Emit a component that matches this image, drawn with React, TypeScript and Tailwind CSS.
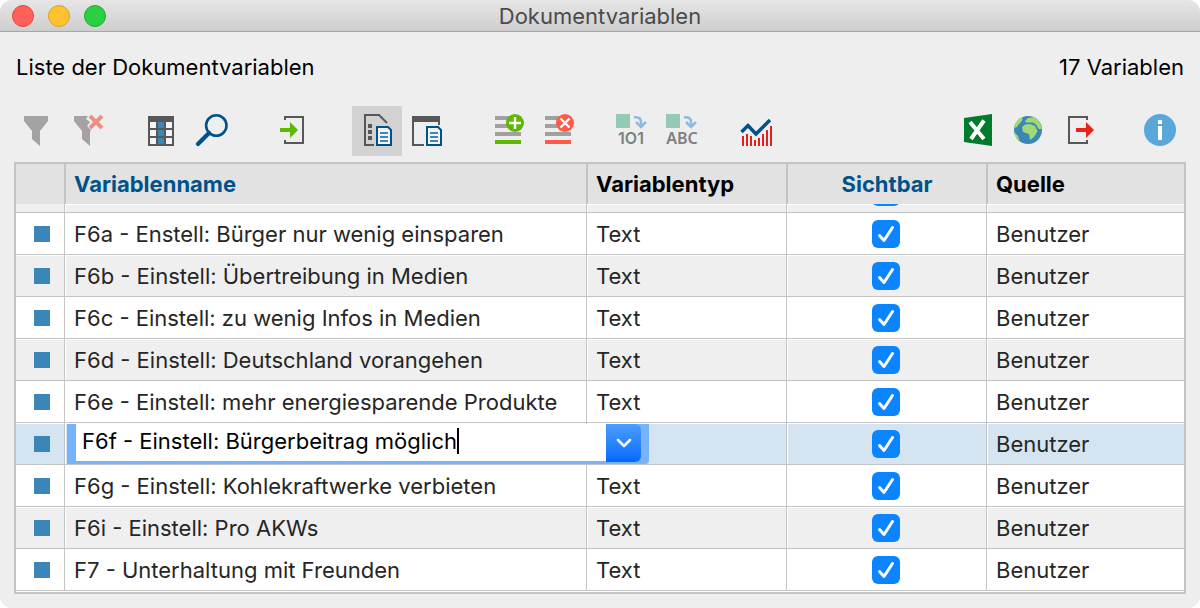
import React, { useState } from 'react';

type Variable = {
  name: string;
  type: string;
  source: string;
};

const variables: Variable[] = [
  { name: 'F6a - Enstell: Bürger nur wenig einsparen', type: 'Text', source: 'Benutzer' },
  { name: 'F6b - Einstell: Übertreibung in Medien', type: 'Text', source: 'Benutzer' },
  { name: 'F6c - Einstell: zu wenig Infos in Medien', type: 'Text', source: 'Benutzer' },
  { name: 'F6d - Einstell: Deutschland vorangehen', type: 'Text', source: 'Benutzer' },
  { name: 'F6e - Einstell: mehr energiesparende Produkte', type: 'Text', source: 'Benutzer' },
  { name: 'F6f - Einstell: Bürgerbeitrag möglich', type: '', source: 'Benutzer' },
  { name: 'F6g - Einstell: Kohlekraftwerke verbieten', type: 'Text', source: 'Benutzer' },
  { name: 'F6i - Einstell: Pro AKWs', type: 'Text', source: 'Benutzer' },
  { name: 'F7 - Unterhaltung mit Freunden', type: 'Text', source: 'Benutzer' },
];

const EDITED_ROW = 5;

function ToolButton({ label, active, children }: { label: string; active?: boolean; children: React.ReactNode }) {
  return (
    <button type="button" aria-label={label} title={label} className={`size-[50px] shrink-0 ${active ? 'bg-[#d2d2d2]' : ''}`}>
      <svg viewBox="0 0 50 50" className="size-full" fill="none">
        {children}
      </svg>
    </button>
  );
}

// Small blue page, shared by the two document icons
function PageShape() {
  return (
    <>
      <path d="M25 21H36L39 24V39H25Z" fill="#f4f4f4" stroke="#00538a" strokeWidth="2" />
      <path d="M28 27H36M28 31H36M28 35H36" stroke="#3e87bd" strokeWidth="2" />
    </>
  );
}

// Square and curved arrow, shared by the two convert icons
function ConvertShape() {
  return (
    <>
      <rect x="8" y="8" width="14" height="14" fill="#93cab6" />
      <path d="M26 11.2H28C31.5 11.2 33 13 33 16V20" stroke="#8fbadd" strokeWidth="2.6" />
      <path d="M28 16L33 21L38 16" stroke="#8fbadd" strokeWidth="2.6" />
    </>
  );
}

function Toolbar() {
  return (
    <div className="flex pl-[10px] pr-[15px]" role="toolbar">
      <div className="flex">
        <ToolButton label="Filter">
          <path d="M14 10H38V15L30 25V40L22 33V25L14 15Z" fill="#a3a3a3" />
        </ToolButton>
        <ToolButton label="Filter zurücksetzen">
          <path d="M14 10H28L26 13L30 16L27 20L31 24L30 26V40L22 33V25L14 15Z" fill="#a3a3a3" />
          <path d="M30 10L42 22M42 10L30 22" stroke="#ec8f85" strokeWidth="4" />
        </ToolButton>
      </div>

      <div className="flex ml-6">
        <ToolButton label="Spalten">
          <rect x="14" y="10" width="26" height="30" fill="#575757" />
          <path d="M16 16h6v6h-6zM16 24h6v6h-6zM16 32h6v6h-6zM32 16h6v6h-6zM32 24h6v6h-6zM32 32h6v6h-6z" fill="#f4f4f4" />
          <path d="M24 16h6v6h-6zM24 24h6v6h-6zM24 32h6v6h-6z" fill="#3a87b7" />
        </ToolButton>
        <ToolButton label="Suchen">
          <circle cx="32.3" cy="19.5" r="10.2" stroke="#00538a" strokeWidth="2.6" />
          <path d="M25 27L14 38" stroke="#00538a" strokeWidth="4.2" strokeLinecap="round" />
        </ToolButton>
      </div>

      <div className="flex ml-8">
        <ToolButton label="Importieren">
          <path d="M19 14V11H37V37H19V34" stroke="#575757" strokeWidth="2" />
          <path d="M14 22H24V16L32 24L24 32V26H14Z" fill="#5cb800" />
        </ToolButton>
      </div>

      <div className="flex ml-9">
        <ToolButton label="Variablenansicht" active>
          <path d="M22 39H13V9H27L35 17" stroke="#575757" strokeWidth="2" />
          <path d="M16 18h4v4h-4zM16 24h4v4h-4zM16 30h4v4h-4z" fill="#575757" />
          <PageShape />
        </ToolButton>
        <ToolButton label="Datenansicht">
          <path d="M22 39H11V11H37V19" stroke="#575757" strokeWidth="2" />
          <rect x="10" y="10" width="28" height="6" fill="#575757" />
          <PageShape />
        </ToolButton>
      </div>

      <div className="flex ml-8">
        <ToolButton label="Neue Variable">
          <path d="M11 12H37M11 20H37M11 28H37" stroke="#a0a0a0" strokeWidth="4" />
          <path d="M11 36H37" stroke="#5cb800" strokeWidth="4" />
          <circle cx="31" cy="17" r="9" fill="#5cb800" />
          <path d="M25 17H37M31 11V23" stroke="#fff" strokeWidth="2.4" />
        </ToolButton>
        <ToolButton label="Variable löschen">
          <path d="M11 12H37M11 20H37M11 28H37" stroke="#a0a0a0" strokeWidth="4" />
          <path d="M11 36H37" stroke="#ff5a47" strokeWidth="4" />
          <circle cx="31" cy="17" r="9" fill="#ff5a47" />
          <path d="M26.5 12.5L35.5 21.5M35.5 12.5L26.5 21.5" stroke="#fff" strokeWidth="2.4" />
        </ToolButton>
      </div>

      <div className="flex ml-6">
        <ToolButton label="In Zahl umwandeln">
          <ConvertShape />
          <text x="23" y="38" textAnchor="middle" fontSize="16" fontWeight="600" fill="#808080">1O1</text>
        </ToolButton>
        <ToolButton label="In Text umwandeln">
          <ConvertShape />
          <text x="24" y="38" textAnchor="middle" fontSize="16" fontWeight="600" fill="#808080" className="font-['Noto_Sans',sans-serif]">ABC</text>
        </ToolButton>
      </div>

      <div className="flex ml-6">
        <ToolButton label="Statistik">
          <path d="M11 40V30M15 40V28M19 40V30M23 40V34M27 40V32M31 40V28M35 40V24M39 40V20" stroke="#e2211c" strokeWidth="2" />
          <path d="M9.5 26L16 19.5L24 28L38 14" stroke="#00538a" strokeWidth="3.4" />
        </ToolButton>
      </div>

      <div className="flex ml-auto">
        <ToolButton label="Excel">
          <path d="M11 12L39 8V40L11 36Z" fill="#007a2b" />
          <path d="M17 16L31 33M31 14.5L18 33" stroke="#fff" strokeWidth="4" />
        </ToolButton>
        <ToolButton label="Web">
          <circle cx="25" cy="24" r="14" fill="#3a87b7" />
          <path d="M11.3 22C12 16 15.5 12 19.5 11.2L19 15L16 18L14 21Z" fill="#a2d977" />
          <path d="M22 15L25 12L31 11.3C35 13.5 38.5 18 38.8 23L35.5 23L33.5 19L30 16.500L23 16.500Z" fill="#a2d977" />
          <path d="M19 21L22 18.5L27 18L32 20L34.5 25L33 28L31 31L27 34L26 28L20 26Z" fill="#a2d977" />
          <path d="M11.2 26L15 30L17 36C14 34 11.5 30 11.2 26Z" fill="#a2d977" />
        </ToolButton>
        <ToolButton label="Exportieren">
          <path d="M34 14V11H16V37H34V34" stroke="#575757" strokeWidth="2" />
          <path d="M23 22H33V16L41 24L33 32V26H23Z" fill="#e8231a" />
        </ToolButton>
      </div>

      <div className="flex ml-8">
        <ToolButton label="Info">
          <circle cx="25" cy="24" r="16" fill="#5aa7da" />
          <path d="M23 14h4v4h-4zM23 20h4v14h-4z" fill="#fff" />
        </ToolButton>
      </div>
    </div>
  );
}

function VisibleCheckbox({ label }: { label: string }) {
  return (
    <span className="grid size-7 shrink-0">
      <input
        type="checkbox"
        defaultChecked
        aria-label={label}
        className="peer col-start-1 row-start-1 size-7 appearance-none rounded-md border border-gray-300 bg-white checked:border-transparent checked:bg-[#0a84ff]"
      />
      <svg viewBox="0 0 28 28" fill="none" className="pointer-events-none col-start-1 row-start-1 size-7 opacity-0 peer-checked:opacity-100">
        <path d="M7.5 15.5L12 20.5L20.5 7.5" stroke="#fff" strokeWidth="3" strokeLinecap="round" strokeLinejoin="round" />
      </svg>
    </span>
  );
}

function NameEditor({ value, onChange }: { value: string; onChange: (value: string) => void }) {
  return (
    <div className="absolute top-px bottom-0 left-[2px] -right-[63px] flex rounded-br-sm bg-[#76b3fa] pl-[9px] pr-2 pb-[2px]">
      <div className="flex flex-1 items-center border-b border-[#a9a9a9] bg-white pl-[6px] pb-1">
        <input
          type="text"
          aria-label="Variablenname"
          value={value}
          onChange={(e) => onChange(e.target.value)}
          className="field-sizing-content bg-transparent text-black outline-none"
        />
        <span className="h-[26px] w-[2px] bg-black" />
      </div>
      <button
        type="button"
        aria-label="Namen auswählen"
        className="flex w-[35px] items-center justify-center rounded-r-md bg-linear-to-b from-[#4a9efd] to-[#0068fb]"
      >
        <svg viewBox="0 0 16 10" fill="none" className="h-[10px] w-4">
          <path d="M2 2L8 8L14 2" stroke="#fff" strokeWidth="2.5" strokeLinecap="round" strokeLinejoin="round" />
        </svg>
      </button>
    </div>
  );
}

export default function App() {
  const [editedName, setEditedName] = useState(variables[EDITED_ROW].name);

  const headCell = 'h-10 border-l-2 border-[#c4c4c4] pl-2 text-left font-bold';
  const bodyCell = 'border-l border-b border-[#c4c4c4] shadow-[inset_1px_1px_0_#fff]';

  return (
    <div className="min-h-screen overflow-hidden rounded-xl bg-[#eeeeee] pb-[14px] font-['Inter','Liberation_Sans',sans-serif] text-[22px] leading-7 text-black">
      {/* Title bar */}
      <header className="relative flex h-8 items-center justify-center border-b border-[#a6a6a6] bg-linear-to-b from-[#e6e6e6] to-[#cecece]">
        <div className="absolute left-3 flex gap-[14px]">
          <button type="button" aria-label="Schließen" className="size-[22px] rounded-full border border-[#e0483f] bg-[#ff6158]" />
          <button type="button" aria-label="Minimieren" className="size-[22px] rounded-full border border-[#dfa023] bg-[#ffc130]" />
          <button type="button" aria-label="Maximieren" className="size-[22px] rounded-full border border-[#1dad2b] bg-[#2acf43]" />
        </div>
        <h1 className="text-[#4b4b4b]">Dokumentvariablen</h1>
      </header>

      <div className="flex justify-between px-4 pt-[21px] pb-[25px]">
        <h2>Liste der Dokumentvariablen</h2>
        <span>17 Variablen</span>
      </div>

      <Toolbar />

      {/* Variable list */}
      <div className="mx-[14px] mt-[6px] border-2 border-[#c4c4c4] bg-white pb-px">
        <table className="w-full table-fixed border-separate border-spacing-0">
          <colgroup>
            <col className="w-12" />
            <col />
            <col className="w-[200px]" />
            <col className="w-[200px]" />
            <col className="w-[198px]" />
          </colgroup>
          <thead className="bg-[#e2e2e2]">
            <tr>
              <th className="h-10" aria-label="Farbe" />
              <th className={`${headCell} text-[#00538a]`}>Variablenname</th>
              <th className={headCell}>Variablentyp</th>
              <th className="h-10 border-l-2 border-[#c4c4c4] text-center font-bold text-[#00538a]">Sichtbar</th>
              <th className={headCell}>Quelle</th>
            </tr>
          </thead>
          <tbody className="text-[#262626]">
            {/* Row scrolled halfway under the header */}
            <tr className="bg-[#efefef]">
              <td className="h-[9px] border-b border-[#c4c4c4]" />
              <td className={bodyCell} />
              <td className={bodyCell} />
              <td className={`${bodyCell} pr-[2px]`}>
                <div className="flex h-2 items-end justify-center overflow-hidden pb-[6px]">
                  <VisibleCheckbox label="Sichtbar" />
                </div>
              </td>
              <td className={bodyCell} />
            </tr>
            {variables.map((variable, index) => {
              const isEdited = index === EDITED_ROW;
              const background = isEdited ? 'bg-[#d5e4f1]' : index % 2 === 1 ? 'bg-[#efefef]' : 'bg-white';

              return (
                <tr key={variable.name} className={background}>
                  <td className="h-[42px] border-b border-[#c4c4c4] pl-1 shadow-[inset_0_1px_0_#fff]">
                    <div className="mx-auto size-4 bg-[#3a87b7]" />
                  </td>
                  <td className={`${bodyCell} relative pl-[9px] whitespace-nowrap`}>
                    {isEdited ? <NameEditor value={editedName} onChange={setEditedName} /> : variable.name}
                  </td>
                  <td className={`${bodyCell} pl-[9px]`}>{variable.type}</td>
                  <td className={`${bodyCell} pr-[2px]`}>
                    <div className="flex justify-center">
                      <VisibleCheckbox label={`${variable.name} sichtbar`} />
                    </div>
                  </td>
                  <td className={`${bodyCell} pl-[9px]`}>{variable.source}</td>
                </tr>
              );
            })}
          </tbody>
        </table>
      </div>
    </div>
  );
}
